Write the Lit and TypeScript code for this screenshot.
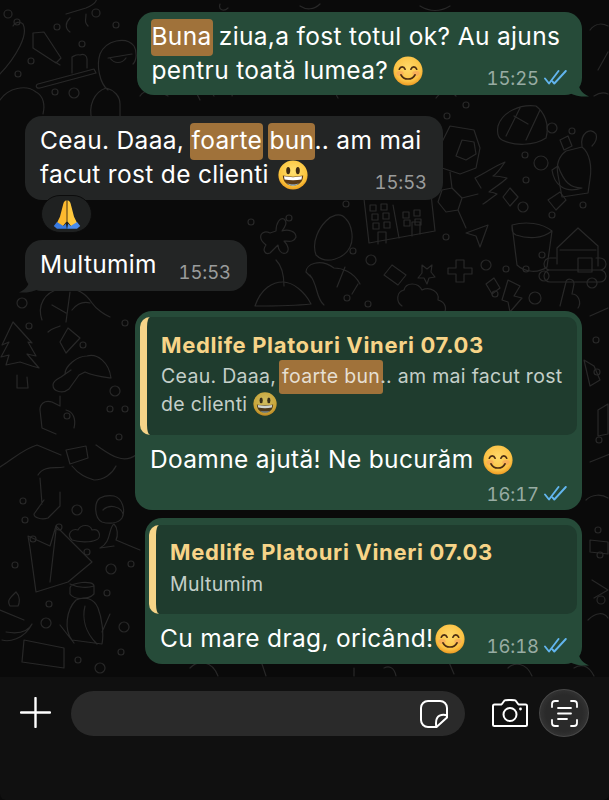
import { LitElement, html, css, svg } from "lit";
import { customElement } from "lit/decorators.js";

const smile = () => html`<svg class="emoji" viewBox="0 0 30 30">
  <defs><radialGradient id="sm" cx="50%" cy="40%" r="60%"><stop offset="0" stop-color="#ffd96a"/><stop offset=".75" stop-color="#fbc244"/><stop offset="1" stop-color="#ee9a22"/></radialGradient></defs>
  <circle cx="15" cy="15" r="14.6" fill="url(#sm)"/>
  <ellipse cx="7" cy="17.5" rx="3.6" ry="2.4" fill="#f59a5e" opacity=".55"/><ellipse cx="23" cy="17.5" rx="3.6" ry="2.4" fill="#f59a5e" opacity=".55"/>
  <path d="M6.3 13.2c1.2-3 4.6-3 5.8 0M17.9 13.2c1.2-3 4.6-3 5.8 0" fill="none" stroke="#4a2c12" stroke-width="1.7" stroke-linecap="round"/>
  <path d="M8 18.8c2.6 5.6 11.4 5.6 14 0" fill="none" stroke="#4a2c12" stroke-width="1.7" stroke-linecap="round"/>
</svg>`;

const grin = (cls = "emoji") => html`<svg class=${cls} viewBox="0 0 30 30">
  <defs><radialGradient id="gr" cx="50%" cy="38%" r="62%"><stop offset="0" stop-color="#ffe071"/><stop offset=".75" stop-color="#fbc53e"/><stop offset="1" stop-color="#ec9c1f"/></radialGradient></defs>
  <circle cx="15" cy="15" r="14.6" fill="url(#gr)"/>
  <ellipse cx="10.2" cy="10.6" rx="2" ry="3.6" fill="#3d2a12"/><ellipse cx="19.8" cy="10.6" rx="2" ry="3.6" fill="#3d2a12"/>
  <path d="M4.8 15.6c6.6 1.4 13.8 1.4 20.4 0-.2 6.6-4.6 10.2-10.2 10.2S5 22.2 4.8 15.6z" fill="#5c3a16"/>
  <path d="M6 16.3c6 1.1 12 1.1 18 0l-.5 3.2c-5.5 1-11.500 1-17 0z" fill="#fff"/>
  <path d="M9 23.3c3.500 1.600 8.500 1.600 12 0-3 3.100-9 3.100-12 0z" fill="#9fc8ee"/>
</svg>`;

const pray = html`<svg class="pray" viewBox="0 0 30 34">
  <path d="M14.4 1.5c-1.8.3-2.900 2-3.500 4L7.300 19.400l-3.500 7.300 6.400 3.500 4.300-5.500z" fill="#fdb92e"/>
  <path d="M15.600 1.500c1.800.3 2.900 2 3.500 4l3.600 13.900 3.500 7.300-6.400 3.500-4.300-5.500z" fill="#ffc83d"/>
  <path d="M15 2v23" stroke="#c98a1c" stroke-width=".8"/>
  <path d="M.5 29.500 4 25.300l7 4.200 2.800-2.400 1 5.400H4z" fill="#3a7be0"/>
  <path d="M29.500 29.500 26 25.300l-7 4.200-2.800-2.400-1 5.400H26z" fill="#4a8cec"/>
</svg>`;

const ticks = html`<svg class="ticks" viewBox="0 0 23 15"><path d="M1 8.500 5 13.500 14.500 1M8.600 11.600l1.700 1.900L21.800 1" fill="none" stroke="#62b5ee" stroke-width="1.900" stroke-linecap="round" stroke-linejoin="round"/></svg>`;

const tailR = (c: string) => html`<svg class="tail r" viewBox="0 0 22 16"><path d="M0 0h9c0 6 3 12 11 15.500-7 .5-14-.5-20-4z" fill=${c}/></svg>`;
const tailL = html`<svg class="tail l" viewBox="0 0 22 16"><path d="M22 0h-9c0 6-3 12-11 15.500 7 .5 14-.5 20-4z" fill="#232525"/></svg>`;

const dots: [number, number, number][] = [
  [8,14,4],[17,22,3],[96,13,4],[57,27,3],[31,61,3],[18,74,3],[55,92,3],[74,93,5],[82,44,3],[116,25,3],
  [22,303,5],[29,326,3],[83,345,3],[125,323,3],[115,391,5],[110,409,3],[125,409,3],[67,416,3],[119,437,3],
  [23,501,3],[77,510,5],[25,520,3],[59,527,3],[33,539,3],[87,552,3],[15,565,3],[111,569,5],[131,564,3],[107,593,3],[49,604,3],
  [46,623,5],[124,627,5],[121,652,3],[78,660,3],[100,668,5],
  [447,116,3],[466,105,3],[552,128,5],[572,131,3],[525,155,3],[541,163,7],[526,180,3],[523,207,5],[583,205,3],[552,215,3],
  [251,222,3],[289,218,3],[346,204,3],[446,237,3],[353,251,3],[371,260,5],[542,255,3],[486,265,5],[506,269,3],[526,269,3],[544,276,5],
  [495,294,3],[535,298,6],[592,283,5],[347,298,3],[368,304,3],
  [596,340,3],[597,372,3],[599,440,3],[598,530,3],[600,555,3],[601,600,4]
];

const paths: string[] = [
  "M-2 76c6-6 16-18 22-30 4-8 6-16 3-22-3-3-8-2-10 2",
  "M33 48l23 15 5-5-17-26-11 1zM55 62l5 3",
  "M38 84l56-15 2 4-56 15c-4 1-5-3-2-4zM72 73v-16c4-2 5-3 8-2 4-2 7 1 7 4v9",
  "M108 90c-8-6-12-24-8-36 6-14 26-18 34-8 3 5 3 14-1 18M108 58l24-4M110 58c4 6 12 6 16 0M92 120c-4-14 2-28 14-32 8 2 14 8 14 16v16",
  "M0 100c8-12 26-16 36-8 8 4 9 14 7 22",
  "M66 14l20-6c10-4 12-8 10-14M70 18c-5 5-5 10 0 14M86 14c0 6-2 8 2 12",
  "M42 320c-5-14 2-28 18-31 12-2 24 2 32 14 4 6 13 12 18 14M48 332c4-4 8-4 12-6M60 342l8-14 12 10-14 15zM52 305l14 8M70 292l-4 30M90 303c-8-2-14 2-18 7",
  "M13 322 2 345l7-3-8 15 8-2-3 10 14-3 12 4 7 2-12-14 9 2-8-14 4 1zM17 375v13h11l-1-11",
  "M65 374c0-8 12-18 22-18 10-3 22 6 24 22-8-1-18-2-26-6l-6 3-10 14c-6 5-16 3-16-4 0-3 4-6 8-8l10-7",
  "M56 434l-14-6-2-18c0-6 4-10 12-8l8 4v-10M74 428c2-8 0-16-8-18M96 445c12 8 26 20 40 10",
  "M61 455l-24-10c-14 4-24 14-37 22M66 450l20-4 2 12-18 6z",
  "M38 475c6-10 18-6 26-8M40 478l2 26M44 500l-10 14c0 4 8 6 14 4l12-12v-14M72 466c8 10 16 12 22 14 10 0 18-6 22-14",
  "M100 498c-6 4-6 20 2 24 6 2 16 2 20-4 4-8 0-20-8-22-6-1-10 0-14 2zM103 510c6-6 18-4 20 4",
  "M72 540c-6-6 0-12 6-10 3-6 12-6 14 0 8-2 10 8 4 10-6 3-18 2-24 0z",
  "M100 548c12-6 8-20 14-24 4 4 4 12 2 16 14 6 24 10 24 10M114 546l-14 2",
  "M30 548l6 44 32-10 24-20-36-36-6 20-22-10zM56 530l-6 52",
  "M70 588c0-6 24-8 24-2v8c-6 6-20 6-24 0zM70 584c8 4 18 4 24 2",
  "M2 640c6 2 22 0 30-16-4 8-14 10-26 8M10 606c-4-6 2-10 6-14 4 4 4 10 2 14zM0 610l24 10",
  "M72 640c-8-10-6-30 4-40 8-4 18-2 22 8 4 10 6 26 4 36zM60 625l14 18M110 614l-8 18M85 606c-3 12 0 26 12 38",
  "M24 640l40 8v20l-42-6z",
  "M266 245c-10-8-4-16 4-12l6-2c0-8 4-14 8-12 4 3 1 8-2 12 6-2 14 0 14 6-2 6-8 4-12 4 4 4 6 10 2 12-5 2-8-4-8-8l-8 8c-5 2-8-3-4-8zM276 260c6 6 8 16 8 26",
  "M255 306c6-18 18-24 28-24 10 0 22 10 28 22-18 2-40 2-56 2z",
  "M316 255c-5-14 4-28 10-34 5-5 14-10 20-2 6 6 8 20 4 28-6 12-24 18-34 8z",
  "M312 278l-6-6c0-8 14-14 28-4 8 0 20 4 26 16M310 275c8 10 6 24 14 30M345 267l-8 20M358 284l-6 10",
  "M364 199l5 44 66-12-5-46M393 205l6 33",
  "M378 244v-12h8v11M412 236v-14h8v12M370 205h6v6h-6zM381 204h6v6h-6zM372 214h6v6h-6zM383 213h6v6h-6zM373 223h6v6h-6zM384 222h6v6h-6zM403 212h6v6h-6zM414 210h6v6h-6zM404 220h6v6h-6zM415 219h6v6h-6z",
  "M481 188l-6-10c12-6 20-12 30-16-4 6-8 12-12 14 6 0 14 2 14 2-6 6-14 10-18 14 4 0 8 2 8 2-6 4-10 8-14 10",
  "M452 188l10 10-4 12-12 2-8-10 4-12zM462 198l16-4M452 188l-2-16M458 210l8 18",
  "M512 225c14-4 30-2 40 6l-5 36c-8 6-22 6-30-2zM512 225c0 6 0 8 4 10 12 4 26 4 36-4",
  "M466 233l22-8-8 22-4-11z",
  "M557 248l21-20 20 18M557 248v16M598 246v20M560 250h36",
  "M556 258h-6a6 6 0 0 0 0 12h50a6 6 0 0 0 0-12h-4M556 270h-6a6 6 0 0 0 0 12h50a6 6 0 0 0 0-12M578 258h14v14h-14z",
  "M498 126c4-14 22-22 38-20 8 6 14 18 10 32-12 8-32 8-44 2-4-2-5-8-4-14zM506 136l14-28M526 140l14-30M514 116l14 8",
  "M450 126l24 4 6 18-4 20-16 6-18-6-6-14zM462 140l12 2 2 12-10 6-10-4z",
  "M558 175c-2-10 0-18 8-24l16-4c8 6 10 20 8 32l-2 14-26 4zM560 140l8-4 4 10-8 4zM582 146c-2-12 8-20 14-12 2 6-2 10-4 12",
  "M552 170c2 14 12 24 30 18-12 0-18-6-24-22z",
  "M548 200l12-8 6 8-10 10z",
  "M503 197l7-9 8 9-8 9z",
  "M422 265l5 4 5-4-1 7 4 5-6 1-2 6-3-6-6 0 4-5zM456 260h8v8h8v6h-8v8h-8v-8h-8v-6h8z",
  "M392 265l14 10-8 10-14-10z",
  "M402 306c-6-4-6-14 2-16 2-8 14-8 18 0 8-4 18 2 16 10 8 2 10 10 4 16",
  "M486 284l8-6 6 10-8 6zM508 280l12 6-6 10 8 2-12 14-2-10-6-2z",
  "M560 306l6-24c0-4 8-4 8 2l-2 10c6 0 10 8 6 14",
  "M140 96c4-6 14-8 20-4l8 4M200 100l-6-12 10-6 10 14M232 96c2-8 10-14 20-6M338 98c-6-8 6-14 14-8M436 98c6-8 14-8 20-2",
  "M220 4c-2 6 4 8 8 4M300 6c6 4 14 4 20-2M420 6c10 6 20 6 30 0",
  "M598 70l10-18M590 30c6-8 14-6 18-4M594 96c6-4 10-4 14-2",
  "M590 316l18-8M584 360l10 6 6 14-10 6zM598 410l10-6v30l-10 2zM590 462l20-8M586 500c6-6 16-6 22-2M590 540l18 2v12l-18-2zM592 580l16 10-14 8M588 620c8-8 16-8 20-2",
  "M190 668c8-8 22-8 28 8M262 664l4 12M354 668v8M384 668c4-2 10-2 12 8M448 660l6 14M508 668c6-6 18-6 24 8M574 668c6-4 14-4 20 8",
];

@customElement("app-root")
export class AppRoot extends LitElement {
  static styles = css`
    :host { display: block; width: 609px; height: 800px; background: #0a0a0a; overflow: hidden; position: relative;
      font-family: Inter, "Liberation Sans", sans-serif; color: #fff; }
    .paper { position: absolute; left: 0; top: 0; width: 609px; height: 677px; }
    .paper path, .paper circle { fill: none; stroke: #282828; stroke-width: 1.2; stroke-linecap: round; stroke-linejoin: round; }
    .chat { position: relative; height: 677px; display: flex; flex-direction: column; box-sizing: border-box; padding-top: 12px; overflow: hidden; }
    .row { display: flex; flex: none; }
    .row.out { justify-content: flex-end; padding-right: 27px; }
    .row.in { padding-left: 25px; }
    .bubble { position: relative; border-radius: 17px; box-sizing: border-box; }
    .out .bubble { background: #264b39; }
    .in .bubble { background: #232525; }
    .b1 { width: 445px; height: 83px; padding: 6.5px 15px 0 14.5px; }
    .b1 .emoji { margin-left: 5px; }
    .b2 { width: 418px; height: 84px; padding: 6.5px 16px 0 15px; margin-top: 21px; }
    .b3 { width: 222px; height: 51px; padding: 6.5px 16px 0 15px; margin-top: 7px; }
    .b4 { width: 447px; height: 199px; padding: 6px 5px 0 5px; margin-top: 20px; }
    .b5 { width: 437px; height: 146px; padding: 7px 5px 0 4px; margin-top: 8px; }
    .line { height: 34px; line-height: 34px; font-size: 24.5px; white-space: nowrap; letter-spacing: .33px; }
    .last { display: flex; justify-content: space-between; align-items: flex-start; }
    .hl { background: #a0723a; border-radius: 4px; padding: 2px 1px 5px; margin: 0 -1px; }
    .emoji { width: 30px; height: 30px; vertical-align: -7px; margin-left: 2px; }
    .time { display: flex; align-items: center; gap: 5px; font-size: 18.5px; letter-spacing: -.1px; line-height: 22px; margin-top: 14px; color: #9a9c9c; font-variant-numeric: tabular-nums; }
    .out .time { color: #98aca3; }
    .ticks { width: 23px; height: 15px; }
    .tail { position: absolute; width: 22px; height: 16px; bottom: -2px; }
    .tail.r { right: -9px; }
    .tail.l { left: -8px; }
    .react { margin: -5px 0 0 16px; width: 51px; height: 38px; box-sizing: border-box; border-radius: 19px; background: #1f2121; border: 1.5px solid #0c0c0c; display: flex; align-items: center; justify-content: center; z-index: 1; }
    .pray { width: 28px; height: 31px; }
    .quote { box-sizing: border-box; width: 100%; background: #1f3c2e; border-left: 7px solid #f6d488; border-radius: 10px; padding: 13px 0 0 14px; }
    .q4 { height: 118px; }
    .q5 { height: 89px; width: 428px; padding-top: 12px; }
    .name { font-size: 22px; line-height: 30px; font-weight: 700; color: #f7d488; white-space: nowrap; letter-spacing: .65px; }
    .qt { font-size: 19.5px; line-height: 28px; height: 28px; color: #c4cfc9; white-space: nowrap; letter-spacing: .3px; }
    .q4 .qt:nth-child(2) { margin-top: 2px; }
    .qt .hl { border-radius: 3px; color: #e6dfd2; padding: 4px 3px 6px; margin: 0 -3px; }
    .qt .dim { width: 24px; height: 24px; vertical-align: -5px; opacity: .78; }
    .q5 .qt { margin-top: 3px; }
    .b4 .msg { margin: 6.5px 0 0 10px; }
    .b4 .time { justify-content: flex-end; margin: 7px 10px 0 0; }
    .b5 .msg-row { margin: 6.5px 10px 0 11px; }
    .bar { flex: none; height: 123px; background: #101010; position: relative; border-radius: 0 0 6px 6px; display: flex; align-items: flex-start; padding: 14px 0 0 20px; box-sizing: border-box; }
    .plus { width: 31px; height: 31px; margin-top: 6px; }
    .input { width: 394px; height: 45px; margin-left: 20px; background: #2a2a2a; border-radius: 23px; display: flex; justify-content: flex-end; align-items: center; padding-right: 17px; box-sizing: border-box; }
    .sticker { width: 28px; height: 28px; }
    .cam { width: 36px; height: 28px; margin: 8px 0 0 27px; }
    .scan { width: 50px; height: 48px; margin: -2px 0 0 11px; border-radius: 50%; display: flex; align-items: center; justify-content: center;
      background: radial-gradient(circle at 50% 50%, #2a2a2a 0 55%, #3a3a3a 85%, #505050 100%); border: 1px solid #484848; box-sizing: border-box; }
    .scan svg { width: 27px; height: 27px; }
  `;

  render() {
    return html`
      <div class="chat">
        <svg class="paper" viewBox="0 0 609 677">
          ${paths.map((d) => svg`<path d=${d}></path>`)}
          ${dots.map(([x, y, r]) => svg`<circle cx=${x} cy=${y} r=${r}></circle>`)}
        </svg>
        <div class="row out"><div class="bubble b1">
          <div class="line"><span class="hl">Buna</span> ziua,a fost totul ok? Au ajuns</div>
          <div class="line last"><span>pentru toată lumea?${smile()}</span><span class="time">15:25 ${ticks}</span></div>
          ${tailR("#264b39")}
        </div></div>
        <div class="row in"><div class="bubble b2">
          <div class="line">Ceau. Daaa, <span class="hl">foarte</span> <span class="hl">bun</span>.. am mai</div>
          <div class="line last"><span>facut rost de clienti ${grin()}</span><span class="time">15:53</span></div>
        </div></div>
        <div class="row in"><div class="react">${pray}</div></div>
        <div class="row in"><div class="bubble b3">
          <div class="line last"><span>Multumim</span><span class="time">15:53</span></div>
          ${tailL}
        </div></div>
        <div class="row out"><div class="bubble b4">
          <div class="quote q4">
            <div class="name">Medlife Platouri Vineri 07.03</div>
            <div class="qt">Ceau. Daaa, <span class="hl">foarte bun</span>.. am mai facut rost</div>
            <div class="qt">de clienti ${grin("dim")}</div>
          </div>
          <div class="line msg">Doamne ajută! Ne bucurăm ${smile()}</div>
          <div class="time">16:17 ${ticks}</div>
        </div></div>
        <div class="row out"><div class="bubble b5">
          <div class="quote q5">
            <div class="name">Medlife Platouri Vineri 07.03</div>
            <div class="qt">Multumim</div>
          </div>
          <div class="line last msg-row"><span>Cu mare drag, oricând!${smile()}</span><span class="time">16:18 ${ticks}</span></div>
          ${tailR("#264b39")}
        </div></div>
      </div>
      <div class="bar">
        <svg class="plus" viewBox="0 0 31 31"><path d="M15.5 1v29M1 15.5h29" stroke="#fff" stroke-width="2.4" stroke-linecap="round"/></svg>
        <div class="input">
          <svg class="sticker" viewBox="0 0 28 28" fill="none" stroke="#fff" stroke-width="2" stroke-linejoin="round" stroke-linecap="round">
            <path d="M8 1h12a7 7 0 0 1 7 7v9.500L16.500 27H8a7 7 0 0 1-7-7V8a7 7 0 0 1 7-7z"/>
            <path d="M27 15.500c-2-1-5.500-.8-7.500.2-3 1.600-4 6-3.200 11.300"/>
          </svg>
        </div>
        <svg class="cam" viewBox="0 0 36 28" fill="none" stroke="#fff" stroke-width="2" stroke-linejoin="round">
          <path d="M2.500 5.500h7l3-4c.8-.7 10.200-.7 11 0l3 4h7c.8 0 1.500.7 1.500 1.500v18.500c0 .8-.7 1.500-1.500 1.500h-31c-.8 0-1.500-.7-1.500-1.500V7c0-.8.700-1.500 1.500-1.500z"/>
          <circle cx="18" cy="15.500" r="6.500"/>
          <circle cx="28.500" cy="10" r="1.400" fill="#fff" stroke="none"/>
        </svg>
        <div class="scan">
          <svg viewBox="0 0 27 27" fill="none" stroke="#fff" stroke-width="1.800" stroke-linecap="round">
            <path d="M1 7V4c0-2 1-3 3-3h3M26 7V4c0-2-1-3-3-3h-3M1 20v3c0 2 1 3 3 3h3M26 20v3c0 2-1 3-3 3h-3M7 8h13M7 13.500h13M7 19h9"/>
          </svg>
        </div>
      </div>
    `;
  }
}
